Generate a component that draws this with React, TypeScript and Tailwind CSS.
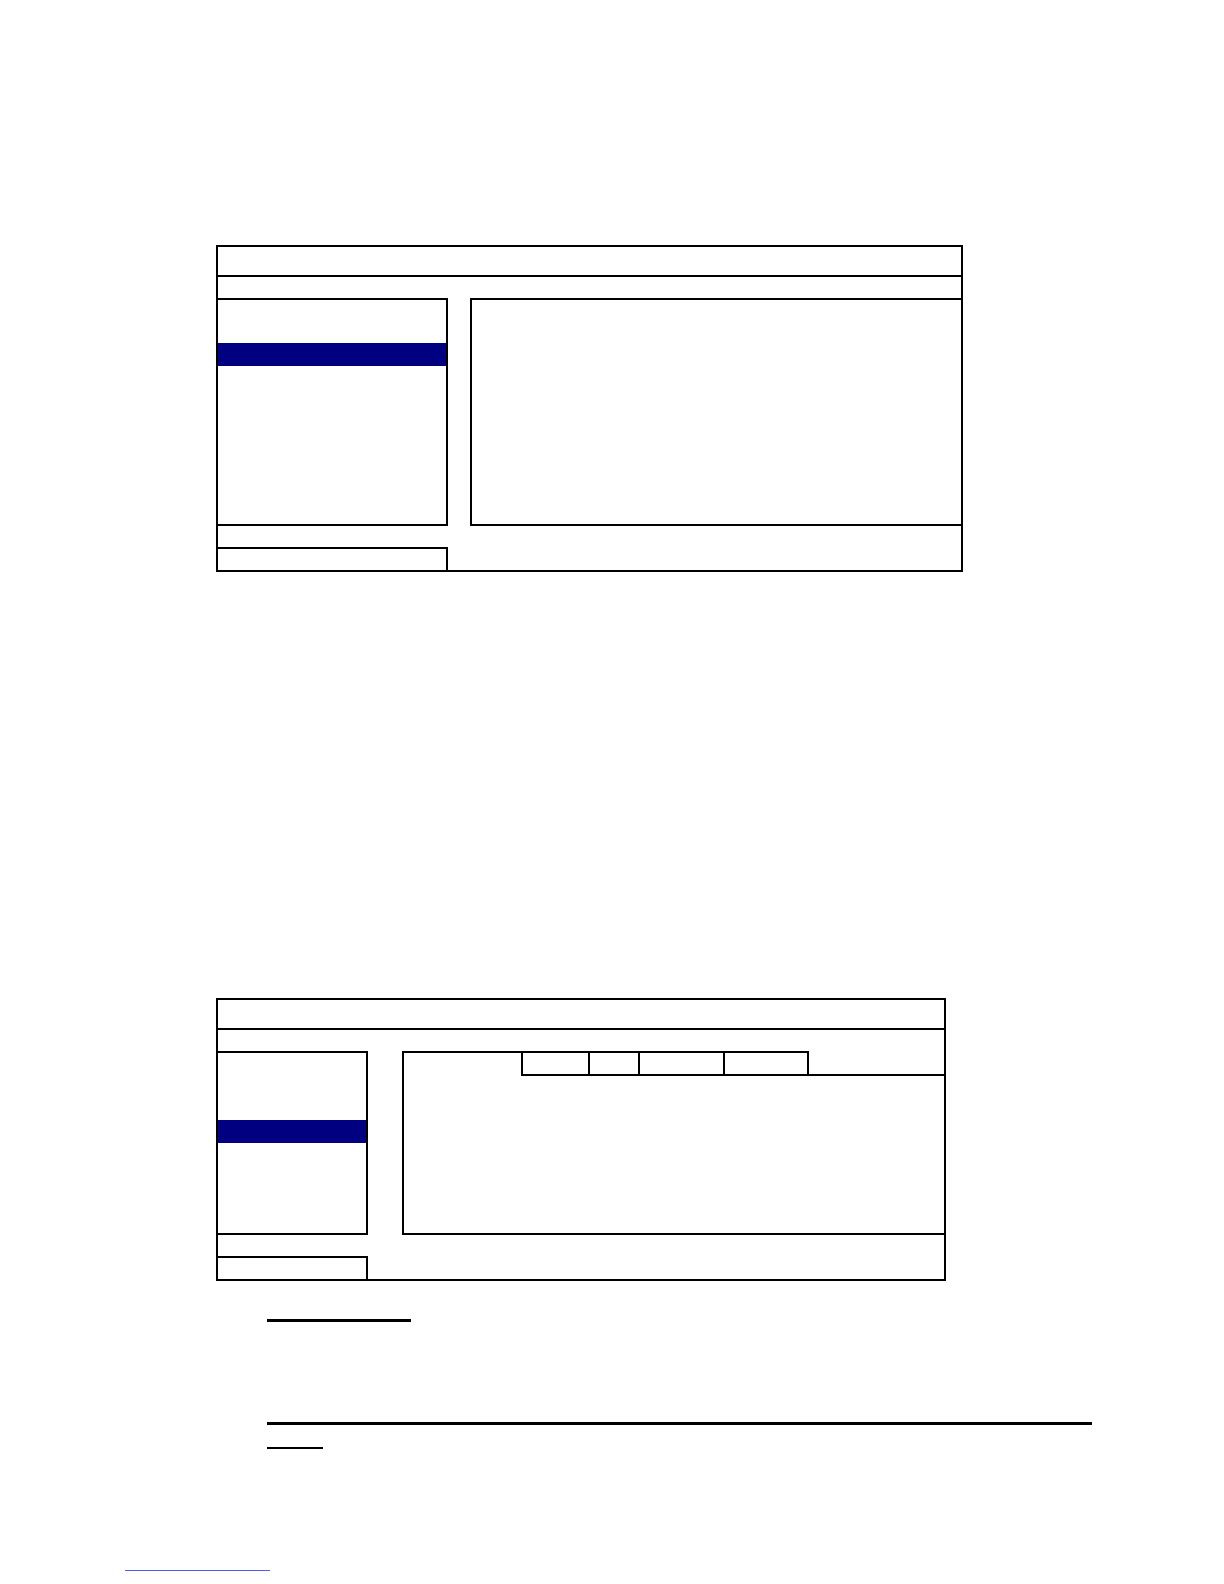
export default function App() {
  return (
    <div className="min-h-[1584px] w-[1224px] bg-white pt-[245px] font-['Liberation_Sans',sans-serif]">
      {/* First menu diagram */}
      <div className="ml-[216px] w-[747px] border-2 border-black">
        <div className="h-[30px] border-b-2 border-black" />
        <div className="h-[21px]" />
        <div className="flex h-[228px]">
          <div className="w-[230px] border-y-2 border-r-2 border-black">
            <div className="mt-[43px] h-[23px] bg-[#000080]" />
          </div>
          <div className="w-[22px]" />
          <div className="flex-1 border-y-2 border-l-2 border-black" />
        </div>
        <div className="h-[21px]" />
        <div className="h-[23px] w-[230px] border-t-2 border-r-2 border-black" />
      </div>

      {/* Second menu diagram */}
      <div className="ml-[216px] mt-[426px] w-[730px] border-2 border-black">
        <div className="h-[30px] border-b-2 border-black" />
        <div className="h-[21px]" />
        <div className="flex h-[184px]">
          <div className="w-[150px] border-y-2 border-r-2 border-black">
            <div className="mt-[67px] h-[23px] bg-[#000080]" />
          </div>
          <div className="w-[34px]" />
          <div className="flex flex-1 flex-col border-b-2 border-l-2 border-black">
            <div className="flex h-[25px]">
              <div className="w-[117px] border-t-2 border-black" />
              <div className="w-[67px] border-y-2 border-l-2 border-black" />
              <div className="w-[50px] border-y-2 border-l-2 border-black" />
              <div className="w-[85px] border-y-2 border-l-2 border-black" />
              <div className="w-[86px] border-y-2 border-x-2 border-black" />
              <div className="flex-1 border-b-2 border-black" />
            </div>
          </div>
        </div>
        <div className="h-[21px]" />
        <div className="h-[23px] w-[150px] border-t-2 border-r-2 border-black" />
      </div>

      {/* Underlined headings */}
      <div className="ml-[267px] mt-[38px] h-[3px] w-[144px] bg-black" />
      <div className="ml-[267px] mt-[100px] h-[3px] w-[825px] bg-black" />
      <div className="ml-[267px] mt-[22px] h-[2px] w-[56px] bg-black" />

      {/* Footer link */}
      <div className="ml-[125px] mt-[121px] h-px w-[145px] bg-[#4a5ee0]" />
    </div>
  );
}
